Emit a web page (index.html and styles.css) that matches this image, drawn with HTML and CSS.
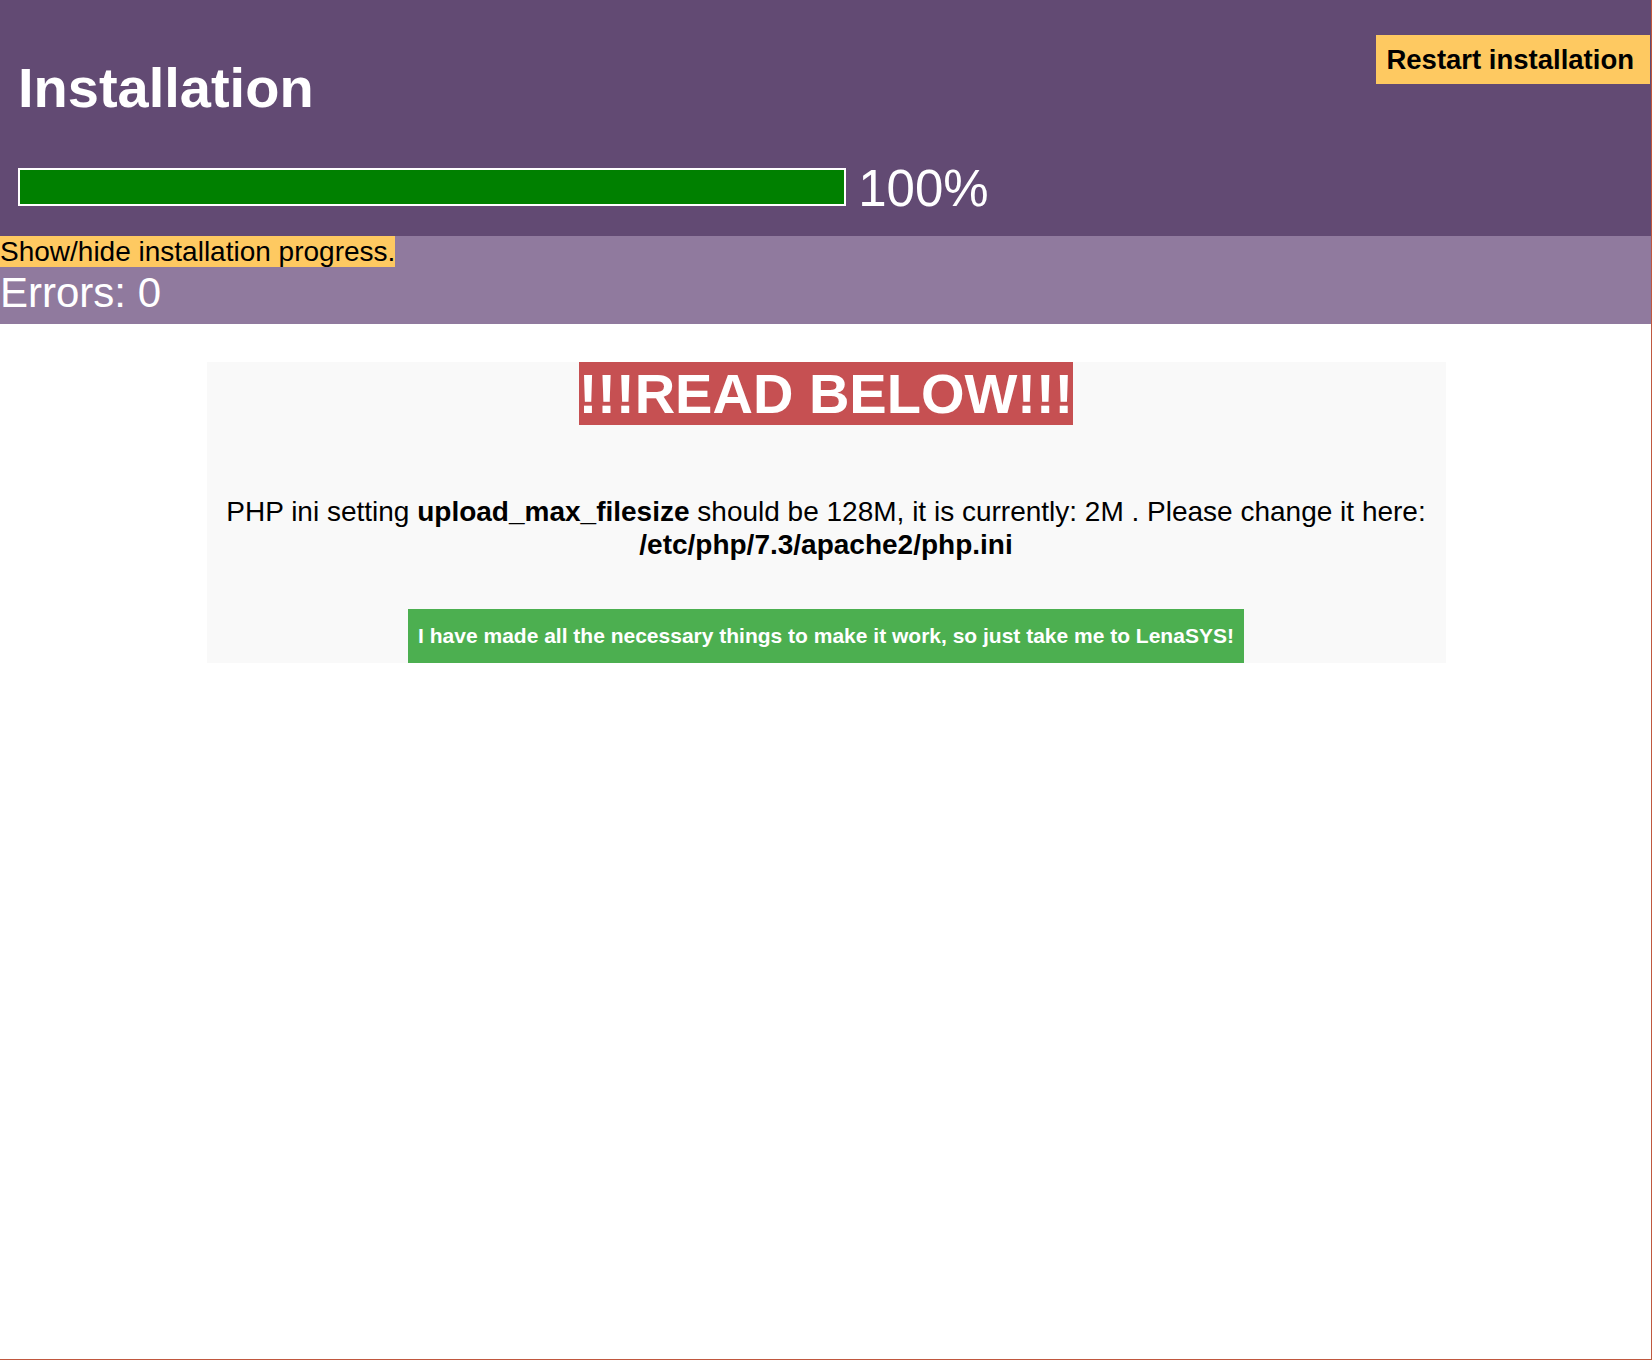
FILE: index.html
```html
<!DOCTYPE html>
<html lang="en">
<head>
    <meta charset="UTF-8">
    <meta name="viewport" content="width=device-width, initial-scale=1.0">
    <title>Installation</title>
    <link rel="stylesheet" href="styles.css">
</head>
<body>
    <div class="header">
        <div class="header-top">
            <h1>Installation</h1>
            <button class="restart-button">Restart installation</button>
        </div>
        <div class="progress-row">
            <span class="progress-bar"><span class="progress-fill"></span></span> 100%
        </div>
    </div>

    <div class="progress-info">
        <div class="toggle-line"><span class="toggle-progress">Show/hide installation progress.</span></div>
        <div class="errors">Errors: 0</div>
    </div>

    <div class="notice">
        <div class="notice-title"><span class="read-below">!!!READ BELOW!!!</span></div>
        <p class="notice-text">PHP ini setting <b>upload_max_filesize</b> should be 128M, it is currently: 2M . Please change it here: <b>/etc/php/7.3/apache2/php.ini</b></p>
        <button class="lenasys-button">I have made all the necessary things to make it work, so just take me to LenaSYS!</button>
    </div>

    <div class="frame"></div>
</body>
</html>
```

FILE: styles.css
```css
body {
    font-family: "Liberation Sans", Arial, sans-serif;
    margin: 0;
    padding: 0;
    background-color: #fff;
}
.header {
    background-color: #624a73;
    color: white;
    padding: 0 0 18px 18px;
}
.header-top {
    display: flex;
    justify-content: space-between;
    align-items: flex-start;
}
h1 {
    font-size: 56px;
    margin: 56px 0 0 0;
    line-height: 64px;
}
.restart-button {
    margin: 35px 2px 0 0;
    padding: 0 16px 0 10px;
    height: 49px;
    border: none;
    background-color: #fec961;
    color: black;
    font-family: "Liberation Sans", Arial, sans-serif;
    font-weight: bold;
    font-size: 27.5px;
}
.progress-row {
    margin-top: 40px;
    font-size: 51px;
    line-height: 58px;
    word-spacing: -2px;
}
.progress-bar {
    display: inline-block;
    width: 824px;
    height: 34px;
    border: 2px solid white;
}
.progress-fill {
    display: block;
    width: 100%;
    height: 100%;
    background-color: #008000;
}
.progress-info {
    background-color: #907a9e;
    padding-bottom: 9px;
}
.toggle-line {
    font-size: 28px;
    line-height: 31px;
}
.toggle-progress {
    background-color: #fec961;
    color: black;
}
.errors {
    margin-top: 3px;
    font-size: 42px;
    line-height: 45px;
    color: white;
}
.notice {
    width: 1239px;
    margin: 38px auto 0 auto;
    background-color: #f9f9f9;
    text-align: center;
}
.notice-title {
    font-size: 56px;
    font-weight: bold;
    line-height: 64px;
}
.read-below {
    background-color: #c65052;
    color: white;
}
.notice-text {
    font-size: 28px;
    line-height: 33px;
    margin: 69px 0 0 0;
}
.lenasys-button {
    margin-top: 48px;
    padding: 15px 10px;
    border: none;
    background-color: #4caf50;
    color: white;
    font-family: "Liberation Sans", Arial, sans-serif;
    font-weight: bold;
    font-size: 21px;
    line-height: 24px;
}
.frame {
    position: fixed;
    top: 0;
    left: 0;
    right: 0;
    bottom: 0;
    border-right: 1px solid #c0583f;
    border-bottom: 1px solid #c0583f;
    pointer-events: none;
}
```
